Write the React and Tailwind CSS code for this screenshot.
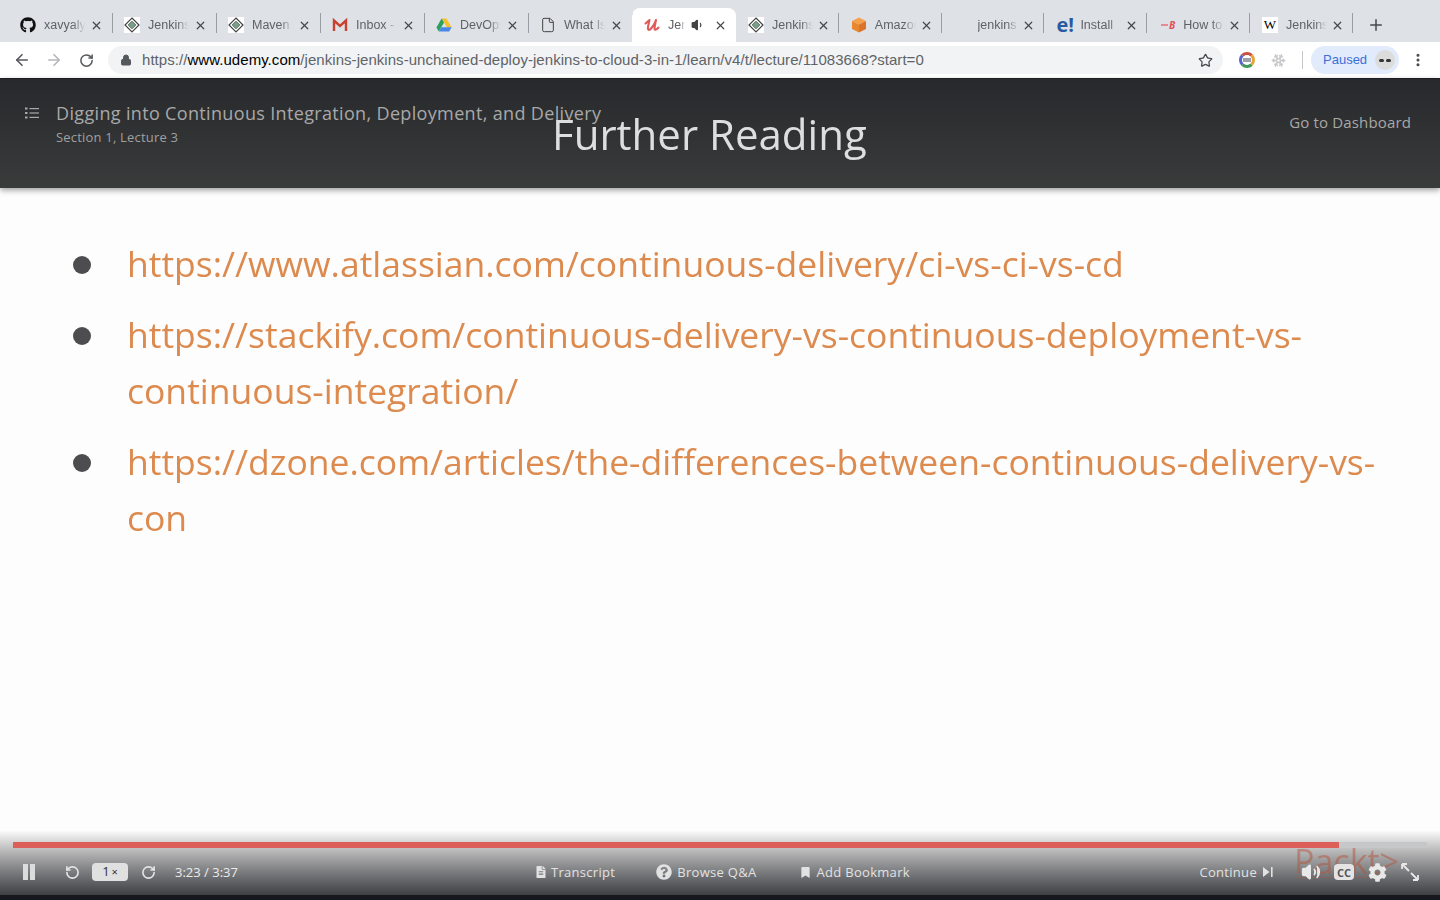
import { ArrowLeft, ArrowRight, RotateCw, RotateCcw, X, Plus, Star, Lock, File, Volume1, Volume2, MoreVertical, Snowflake } from "lucide-react";
import { FaGithub, FaQuestionCircle, FaBookmark, FaFileAlt, FaCog } from "react-icons/fa";

function JenkinsIcon() {
    return (
        <svg width="16" height="16" viewBox="0 0 16 16">
            <rect width="16" height="16" fill="#fff" />
            <path d="M8 1 L15 8 L8 15 L1 8 Z" fill="none" stroke="#444" strokeWidth="1.2" />
            <path d="M8 4.2 L11.8 8 L8 11.8 L4.2 8 Z" fill="#7d9f88" stroke="#3d5c48" strokeWidth="0.8" />
        </svg>
    );
}

function GmailIcon() {
    return (
        <svg width="16" height="16" viewBox="0 0 16 16" fill="none">
            <path d="M3 5 L8 9.5 L13 5" stroke="#dcd8d2" strokeWidth="3" />
            <path d="M2 14 V3.5 L8 8.8 L14 3.5 V14" stroke="#c8432f" strokeWidth="2.4" />
        </svg>
    );
}

function DriveIcon() {
    return (
        <svg width="16" height="16" viewBox="0 0 16 16">
            <path d="M5.6 1.5 H10.4 L15.6 10.2 H10.8 Z" fill="#f6c02d" />
            <path d="M5.6 1.5 L0.4 10.4 L2.8 14.5 L8 5.6 Z" fill="#2aa160" />
            <path d="M2.8 14.5 H13.2 L15.6 10.2 H5.3 Z" fill="#4a86e8" />
        </svg>
    );
}

function UdemyIcon() {
    return (
        <svg width="16" height="16" viewBox="0 0 16 16" fill="none">
            <path d="M1.5 6.5 L5.5 3 C5 6 3.5 10 4 12 C4.5 13.5 6 13 7.5 11 C9.5 8.5 11 6 12 3 C11.3 6.5 10.3 10 10.6 12 C10.8 13.3 12.5 12.8 14.5 10.5" stroke="#e05a5a" strokeWidth="2.1" strokeLinecap="round" strokeLinejoin="round" />
        </svg>
    );
}

function CubeIcon() {
    return (
        <svg width="16" height="16" viewBox="0 0 16 16">
            <path d="M8 0.5 L15 4 L8 7.5 L1 4 Z" fill="#f5a04a" />
            <path d="M1 4 L8 7.5 V15.5 L1 12 Z" fill="#e8872f" />
            <path d="M15 4 L8 7.5 V15.5 L15 12 Z" fill="#d9742a" />
        </svg>
    );
}

function BaeldungIcon() {
    return (
        <span className="flex w-4 items-center justify-end text-[10px] font-bold italic text-[#e0505a]">
            <span className="mr-[1px] h-[2px] w-[7px] bg-[#e88a8f]" />B
        </span>
    );
}

const tabs = [
    { title: "xavyaly", icon: <FaGithub size={16} color="#111" /> },
    { title: "Jenkins", icon: <JenkinsIcon /> },
    { title: "Maven", icon: <JenkinsIcon /> },
    { title: "Inbox -", icon: <GmailIcon /> },
    { title: "DevOps", icon: <DriveIcon /> },
    { title: "What Is", icon: <File size={16} color="#444" strokeWidth={1.5} /> },
    { title: "Jenkins", icon: <UdemyIcon />, active: true },
    { title: "Jenkins", icon: <JenkinsIcon />, narrow: true },
    { title: "Amazon", icon: <CubeIcon />, narrow: true },
    { title: "jenkins", icon: <span className="w-4" />, narrow: true },
    { title: "Install", icon: <span className="w-4 text-[20px] leading-4 font-bold text-[#2a5aa0]">e!</span>, narrow: true },
    { title: "How to", icon: <BaeldungIcon />, narrow: true },
    { title: "Jenkins", icon: <span className="flex h-4 w-4 items-center justify-center bg-white font-['Liberation_Serif',serif] text-[13px] text-black">W</span>, narrow: true },
];

function Tab({ tab }) {
    return (
        <div className={`relative flex h-[34px] shrink-0 items-center pl-3 pr-[9px] ${tab.narrow ? "w-[102.8px]" : "w-[104px]"} ${tab.active ? "rounded-t-lg bg-white" : ""}`}>
            <span className="flex h-4 w-4 shrink-0 items-center justify-center">{tab.icon}</span>
            <span className={`ml-2 overflow-hidden whitespace-nowrap font-['Liberation_Sans',sans-serif] text-[12.5px] text-[#5f6266] [mask-image:linear-gradient(to_right,black_70%,transparent)] ${tab.active ? "w-[17px]" : "w-[41px]"}`}>
                {tab.title}
            </span>
            {tab.active && <Volume1 size={14} className="ml-[6px]" color="#444" fill="#444" />}
            <X size={13} strokeWidth={2.2} color="#45484c" className="ml-auto" />
            {!tab.active && <span className={`absolute top-[5px] h-5 w-px bg-[#9a9da1] ${tab.narrow ? "right-0" : "-right-px"}`} />}
        </div>
    );
}

function Browser() {
    return (
        <div className="shrink-0">
            <div className="flex h-[42px] items-end bg-[#dee1e6] pl-2">
                {tabs.map((tab, i) => (
                    <Tab key={i} tab={tab} />
                ))}
                <Plus size={18} color="#45484c" strokeWidth={2} className="mb-2 ml-[14px]" />
            </div>
            <div className="flex h-9 items-center bg-white pl-[13px] pr-[13px]">
                <ArrowLeft size={18} color="#55585c" strokeWidth={2.2} />
                <ArrowRight size={18} color="#b4b6ba" strokeWidth={2.2} className="ml-[14px]" />
                <RotateCw size={15} color="#55585c" strokeWidth={2.4} className="ml-[16px]" />
                <div className="ml-[14px] flex h-7 w-[1115px] items-center rounded-full bg-[#f1f3f4] pl-[12px] pr-[10px]">
                    <Lock size={12} color="#55585c" fill="#55585c" />
                    <span className="ml-[10px] font-['Liberation_Sans',sans-serif] text-[15px] tracking-[0.05px] text-[#5f6368]">
                        https://<span className="text-black">www.udemy.com</span>/jenkins-jenkins-unchained-deploy-jenkins-to-cloud-3-in-1/learn/v4/t/lecture/11083668?start=0
                    </span>
                    <Star size={15} color="#45484c" strokeWidth={2} className="ml-auto" />
                </div>
                <div className="ml-4 flex h-4 w-4 items-center justify-center rounded-full border-[3px] border-t-[#c9503f] border-r-[#e8a33a] border-b-[#3f9a5a] border-l-[#5a66c8] bg-white">
                    <span className="h-1 w-2 bg-[#9aa0a6]" />
                </div>
                <Snowflake size={15} color="#c8cacc" strokeWidth={2.6} className="ml-[16px]" />
                <span className="ml-[16px] h-[18px] w-px bg-[#c4c6c9]" />
                <div className="ml-2 flex h-7 w-[88px] items-center rounded-full bg-[#e2ebfb] pl-[12px] pr-[4px]">
                    <span className="font-['Liberation_Sans',sans-serif] text-[13px] text-[#3b6fd8]">Paused</span>
                    <span className="relative ml-auto flex h-5 w-5 items-center justify-center gap-[2px] rounded-full bg-[#dcdcdc]">
                        <span className="h-[3px] w-[5px] rounded-full bg-[#333]" />
                        <span className="h-[3px] w-[5px] rounded-full bg-[#333]" />
                    </span>
                </div>
                <MoreVertical size={16} color="#45484c" strokeWidth={2.6} className="ml-[11px]" />
            </div>
            <div className="h-px bg-[#202124]" />
        </div>
    );
}

function ListIcon() {
    return (
        <svg width="14" height="12" viewBox="0 0 14 12" fill="#a9a9a9">
            <rect x="0" y="0.5" width="2.5" height="2" />
            <rect x="0" y="5" width="2.5" height="2" />
            <rect x="0" y="9.5" width="2.5" height="2" />
            <rect x="4.5" y="1" width="9.5" height="1.2" />
            <rect x="4.5" y="5.4" width="9.5" height="1.2" />
            <rect x="4.5" y="9.8" width="9.5" height="1.2" />
        </svg>
    );
}

function Header() {
    return (
        <div className="relative z-10 flex h-[109px] shrink-0 items-start justify-between bg-gradient-to-b from-[#27292c] to-[#3a3b3b] pl-[25px] pr-[29px] shadow-[0_2px_6px_rgba(0,0,0,0.4)]">
            <div className="mt-[28px]">
                <ListIcon />
            </div>
            <div className="ml-[17px] mt-[21px] mr-auto">
                <div className="text-lg leading-[26px] tracking-[0.34px] text-[#a8a8a8]">Digging into Continuous Integration, Deployment, and Delivery</div>
                <div className="mt-[2px] text-[13px] leading-[18px] tracking-[0.2px] text-[#a0a0a0]">Section 1, Lecture 3</div>
            </div>
            <div className="mt-[32px] text-[15px] leading-[22px] tracking-[0.15px] text-[#a8a8a8]">Go to Dashboard</div>
        </div>
    );
}

const links = [
    ["https://www.atlassian.com/continuous-delivery/ci-vs-ci-vs-cd"],
    ["https://stackify.com/continuous-delivery-vs-continuous-deployment-vs-", "continuous-integration/"],
    ["https://dzone.com/articles/the-differences-between-continuous-delivery-vs-", "con"],
];

function Slide() {
    return (
        <ul className="flex flex-1 flex-col gap-[15px] bg-[#fdfdfd] pl-[73px] pt-[47px] blur-[0.6px]">
            {links.map((lines, i) => (
                <li key={i} className="flex">
                    <span className="mt-[21px] h-[18px] w-[18px] shrink-0 rounded-full bg-[#4d4d4f]" />
                    <div className="ml-[37px] -translate-x-px text-[35.5px] leading-[56px] text-[#dc8a4e]">
                        {lines.map((line, j) => (
                            <div key={j} className="whitespace-nowrap">{line}</div>
                        ))}
                    </div>
                </li>
            ))}
        </ul>
    );
}

function ControlLink({ icon, label, className }) {
    return (
        <span className={`flex items-center text-[13px] font-medium tracking-[0.3px] text-[#e2e2e2] ${className}`}>
            {icon}
            <span className="translate-y-px">{label}</span>
        </span>
    );
}

function Controls() {
    return (
        <div className="absolute inset-x-0 bottom-0 h-[70px]">
            <div className="h-[65px] bg-gradient-to-b from-[#fdfdfd]/90 via-[#a9a9aa] via-40% to-[#3e4044]" />
            <div className="h-[5px] bg-[#16181d]" />

            {/* watermark baked into the video, sits under the controls */}
            <div className="absolute left-[1294px] top-[11px] text-[34px] font-medium leading-10 text-[#b4553e] opacity-50 blur-[0.5px]">Packt&gt;</div>
            <div className="absolute left-[1296px] top-[47px] h-px w-[84px] bg-[#b4553e] opacity-40" />

            <div className="absolute left-[13px] right-[13px] top-[12px] h-[6px] bg-[#c6c7c9]">
                <div className="h-full bg-[#dd5f5a]" style={{ width: "93.75%" }} />
            </div>

            <div className="absolute inset-x-0 top-[33px] flex h-[18px] items-center pl-[23px] pr-[20px]">
                <span className="flex gap-[2px]">
                    <span className="h-4 w-[5px] bg-[#dcdcdc]" />
                    <span className="h-4 w-[5px] bg-[#dcdcdc]" />
                </span>
                <RotateCcw size={15} color="#e4e4e4" strokeWidth={2.6} className="ml-[30px]" />
                <span className="ml-[12px] flex h-[18px] w-9 items-center justify-center rounded-sm bg-[#e0e0e0] text-[13px] text-[#333]">1<span className="ml-[2px] text-[11px]">×</span></span>
                <RotateCw size={15} color="#e4e4e4" strokeWidth={2.6} className="ml-[13px]" />
                <span className="ml-[19px] translate-y-px text-[13px] text-[#ececec]">3:23 / 3:37</span>

                <ControlLink className="ml-[297px] gap-1" icon={<FaFileAlt size={12} />} label="Transcript" />
                <ControlLink className="ml-[41px] gap-[5px]" icon={<FaQuestionCircle size={16} />} label="Browse Q&A" />
                <ControlLink className="ml-[43px] gap-[6px]" icon={<FaBookmark size={11} />} label="Add Bookmark" />

                <span className="ml-auto flex items-center text-[13px] font-medium tracking-[0.3px] text-[#e2e2e2]">
                    <span className="translate-y-px">Continue</span>
                    <svg width="10" height="12" viewBox="0 0 10 12" fill="#e2e2e2" className="ml-[6px]">
                        <path d="M0 1 L6.5 6 L0 11 Z" />
                        <rect x="8" y="1" width="1.6" height="10" />
                    </svg>
                </span>
                <Volume2 size={20} color="#e8e8e8" fill="#e8e8e8" className="ml-[28px]" />
                <span className="ml-[13px] flex h-4 w-5 items-center justify-center rounded-sm bg-[#e4e4e4] text-[11px] font-bold leading-none text-[#555]">CC</span>
                <FaCog size={19} color="#e8e8e8" className="ml-[14px]" />
                <svg width="20" height="20" viewBox="0 0 20 20" fill="none" stroke="#e8e8e8" strokeWidth="1.8" className="ml-[13px]">
                    <path d="M2 2 L9 9 M2 2 H7 M2 2 V7 M18 18 L11 11 M18 18 H13 M18 18 V13" />
                </svg>
            </div>
        </div>
    );
}

export default function App() {
    return (
        <div className="flex h-[900px] w-[1440px] flex-col overflow-hidden font-['Open_Sans',sans-serif]">
            <Browser />
            <div className="relative flex flex-1 flex-col">
                <Header />
                <div className="absolute left-[552px] top-[27px] z-20 text-[42px] leading-[56px] text-[#dedede] blur-[0.4px]">Further Reading</div>
                <Slide />
                <Controls />
            </div>
        </div>
    );
}
